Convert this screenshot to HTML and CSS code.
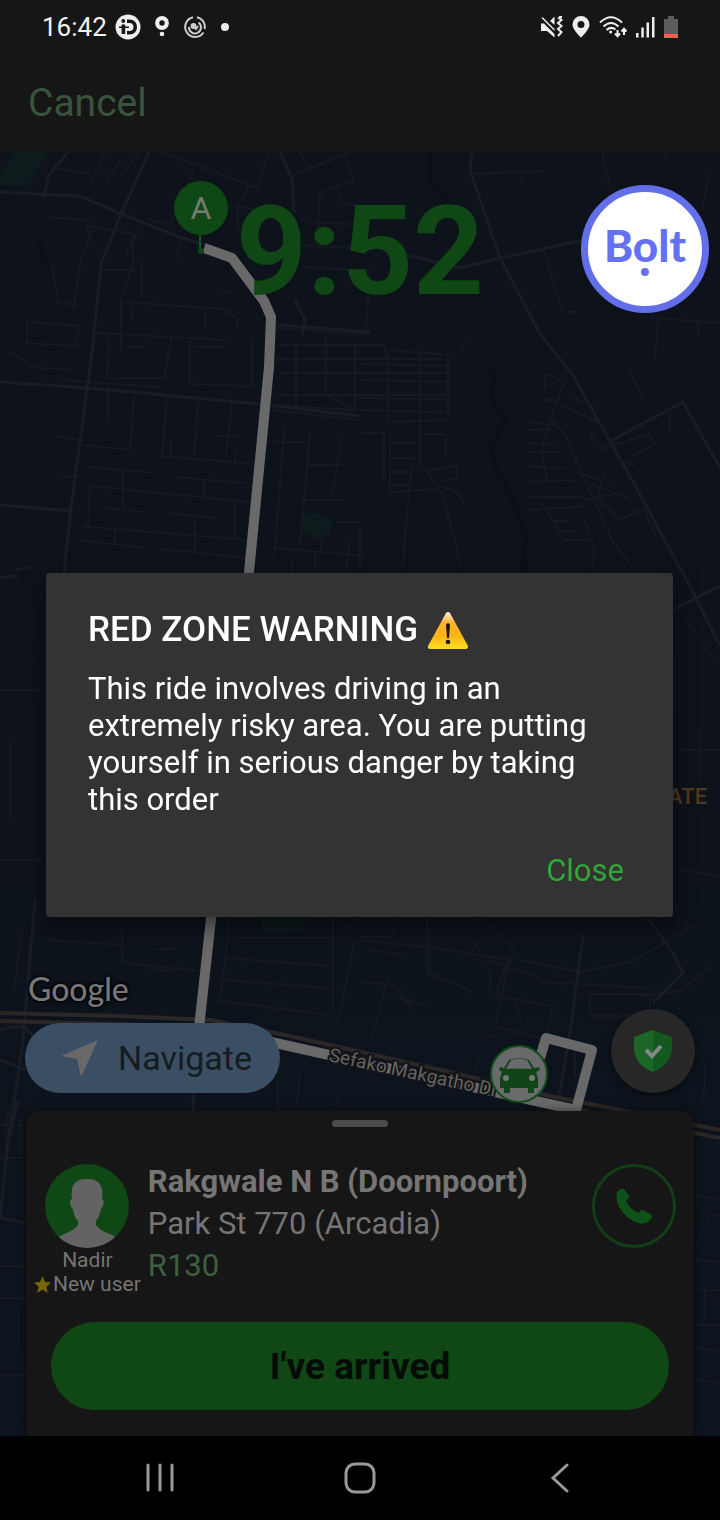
FILE: index.html
```html
<!DOCTYPE html>
<html lang="en">
<head>
<meta charset="utf-8">
<meta name="viewport" content="width=device-width, initial-scale=1">
<title>Ride in progress</title>
<link rel="stylesheet" href="styles.css">
</head>
<body>
<div class="screen">
  <header class="status">
    <time class="clock">16:42</time>
    <div class="status-group notifications">
      <svg width="26" height="26" viewBox="0 0 26 26" aria-hidden="true"><circle cx="13" cy="13" r="12.500" fill="#eee"/><g fill="#161616"><circle cx="8.300" cy="7" r="1.900"/><path d="M6.600 10.500h3.600V20H6.600zM12 5.500h2.500c4.500 0 7.500 3 7.500 7.500s-3 7.500-7.500 7.500H12v-3.500h2.500c2.500 0 4-1.600 4-4s-1.500-4-4-4H12z"/><path d="M4 12.500h10v1.500H4z"/></g></svg>
      <svg width="14" height="22" viewBox="0 0 14 22" aria-hidden="true"><circle cx="7" cy="7" r="4.800" fill="none" stroke="#eee" stroke-width="4.200"/><circle cx="7" cy="18" r="2.300" fill="#eee"/></svg>
      <svg width="24" height="24" viewBox="0 0 24 24" fill="none" stroke="#ccc" stroke-width="2" aria-hidden="true"><path d="M14 2.200A10 10 0 0 1 21.700 14"/><path d="M20.500 17.500A10 10 0 1 1 10 2.200"/><path d="M15.500 7.500A6 6 0 1 1 6 12"/><circle cx="10.500" cy="11" r="2" fill="#ccc"/><path d="M10 11l3 3 2-3"/></svg>
      <svg width="8" height="8" viewBox="0 0 8 8" aria-hidden="true"><circle cx="4" cy="4" r="4" fill="#eee"/></svg>
    </div>
    <div class="status-group system">
      <svg width="22" height="22" viewBox="0 0 22 22" fill="#eee" aria-hidden="true"><path d="M0 7.500h3l10.500 10.500v3.500L6 15H0zM1.500 1l12 12v2L.5 2zM9 5l4.500-4.500V9z"/><path d="M17 1.500l3.500 2.500-3.500 3 3.500 3-3.500 3 3.500 3-3.500 4M18 1h3" fill="none" stroke="#eee" stroke-width="2"/></svg>
      <svg width="18" height="22" viewBox="0 0 18 22" aria-hidden="true"><path fill="#eee" fill-rule="evenodd" d="M9 0a8.500 8.500 0 0 1 8.500 8.500C17.500 14 9 21.500 9 21.500S.5 14 .5 8.500A8.500 8.500 0 0 1 9 0zm0 5a3.500 3.500 0 1 0 0 7 3.500 3.500 0 0 0 0-7z"/></svg>
      <svg width="28" height="22" viewBox="0 0 28 22" fill="none" stroke="#eee" stroke-width="2" aria-hidden="true"><path d="M1 6.500Q12 -4 23 6.500M4.500 10.500Q12 3.500 19.500 10.500M7.500 14q4.500-4 9-.500"/><circle cx="11.700" cy="16" r="1.500" fill="#eee" stroke="none"/><path d="M18.500 14v6m-2.500-2.500l2.500 2.700 2.500-2.700M25 19v-6m-2.500 2.500l2.500-2.700 2.500 2.700"/></svg>
      <svg width="19" height="21" viewBox="0 0 19 21" fill="#eee" aria-hidden="true"><path d="M0 16h2.500v4.500H0zM5.300 10.500h2.500v10H5.300zM10.500 5.500H13v15h-2.500zM16 0h2.500v20.500H16z"/></svg>
      <svg width="14" height="22" viewBox="0 0 14 22" aria-hidden="true"><path fill="#5c5c5c" d="M4 0h6v3h4v15H0V3h4z"/><path fill="#f26152" d="M0 18h14v4H0z"/></svg>
    </div>
  </header>

  <div class="topbar"><button class="cancel" type="button">Cancel</button></div>

  <main class="map">
    <svg class="map-canvas" viewBox="0 152 720 1284" preserveAspectRatio="xMidYMid slice" role="img" aria-label="Route map">
      <defs>
        <linearGradient id="land" x1="0" y1="0" x2="0" y2="1"><stop offset="0" stop-color="#0e121a"/><stop offset=".6" stop-color="#0d131b"/><stop offset="1" stop-color="#0d141f"/></linearGradient>
      </defs>
      <rect y="152" width="720" height="1284" fill="url(#land)"/>
      <g fill="#0e1b1c">
        <path d="M14 152h34l-20 34H0v-10z"/><path d="M300 516l18-4 15 8-4 14-14 4-14-8z"/><path d="M262 917h45l-4 14-42 1z"/>
      </g>
      <g class="water"><path d="M494 370l-2 30 14 20-14 24 2 20 16 30 16 40-4 40M430 152v30l18 20"/><path d="M38 240l10 28"/></g>
      <g class="streets">
        <path d="M54 168l36 6M105 152l-16 32M120 160l-13 23M140 152l-20 24M162 152l95 36 12-36M194 170l-10 22-14 34M250 185l-12 20v24M300 152l8 16 40-14M292 176l60-24M317 245l3-52 33-12-8-29M336 184l8 20 16 2M309 222l60 3M302 245l70 4M302 267l68 4-4 60M228 205l25 4M48 217l40 3 5 10-12 30-8 50"/>
        <path d="M90 241l-3-15 46 8v30l-12 36v50M101 270h35M52 265l6 38 20 2M138 230l-12 25M180 240l-4 20M145 218l20 6M121 302l104 7 12 10v10M142 260v38M27 322l53 4-5 20-48-3zM10 352l25 16 34 1M96 333l132 7M109 340l-2 38h57l8-43M190 340v44l62 2v-48M132 306v14M205 312v16M222 290l10 5M125 347h20M195 347h30"/>
        <path d="M275 328l90 6M280 345h104l2 14M275 359h168M280 373h170M276 395h170M275 405l80 5M296 345v62M326 335v60l28 15M355 345v65M388 350v72M420 350v80M448 355v65M390 350l57 5M360 364l88 2M360 380l88 2M360 398l85 1M360 410l85 2M460 350l8-10M388 422l60-2M362 433h22v50M390 434v58l48-3M420 430v34M424 434h22v22M392 443h24M392 458h22M392 472h20M392 485h18M412 464l-6 60-3 48M422 464l20 30 14 50 5 28M430 470l26-4 2 12-20 4M435 485l20 6 10 12M360 524v48M350 540l-4 32"/>
        <path d="M60 380l100 7M108 386v36M134 396l-4 52M82 445l50 5M56 436l24 4M167 398l-5 58 92 8M198 402l-4 53M232 402l-6 53M215 436h22M171 440v18M236 450l-2 14M88 467l66 6M90 486l160 16M90 486l-2 46M123 470v38M105 508l40 4M175 477l70 6M204 480v18M168 513l48 5M195 518v36M82 526l165 14M235 502v36M78 540l68 8M115 530v14M160 549l90 9M60 477l20-1"/>
        <path d="M284 428l-4 58-6 72M310 432l-6 70-4 44M342 436l-10 60M275 442h30M306 465h40M303 500h40M336 522h24M275 548l90 8M292 558v14M315 555v17M346 560v12M322 536l-2 18M272 410l88 10"/>
        <path d="M545 375l16 4-16 10v-14zM565 380l-15 40-8 30 5 32M550 418l16 18 18 42 30 66 18 22M529 422l26 4M528 430h22M528 443l28 2M528 452h32M528 466l38 3M529 482l50-2M529 497h54M530 510l56-4M540 400h20M553 521h17M557 531h18M540 500l24 40h26M560 405l40 18M570 396l24 10M598 450l50-16 8 10-25 12M628 370l16 28M670 411v22M590 432l5 12M605 470l-8 30M577 472l36 14M615 458l20 8M590 484l38 14M600 500l20 20 24-12 12 30M585 520l10 30-4 20M584 500l40-8"/>
        <path d="M471 174l72-3M519 170l3 12M543 248l20 64h14M658 318l-3 40M698 320v16M657 318l63 5M602 152l8 36M710 170l-8 40M666 152v5"/>
        <path d="M122 928v35l80 8M155 949h20M150 968l20 4M48 940l74 5M230 917l-10 84 110 14M240 938h95M226 958l105 8M225 980l100 8M333 917v90M355 940l-18 86M350 930l8-12M360 940l90 10 60 10M400 917l-8 20h-32M368 950l36 4M430 928v45M485 960l60 20M427 917v55l45 20M460 925l24-8 36 40M470 952l15-16M510 956l-15 40 58 10-8 34-50-14zM490 970v20M540 982l110 6M520 960l60 12 50-10 70-40M640 996l40-5 30-24M590 994h60v22h-60zM360 982l35 3 18 25M388 978l-16 60M395 997l30 8M480 1055l-5 18M485 1034l15 6M515 1000l6 22M575 1050h14v25h-14z"/>
        <path d="M300 1070l-4 40M278 1080v30M340 1095l-5 16M0 1125h24M10 1104l-6 36M20 1120v35M0 1158h25M0 1298h26M18 1310v40M0 1266h25M0 1375h26M696 1196l24 3M700 1235l10-20h10M696 1260l24 2M698 1290h22v12M705 1290v30M697 1325h23M697 1348l23 3M697 1380l23 3M706 1060l-3 40"/>
        <path d="M680 750h40M700 730v50M0 690h40M10 740v80M0 860h44M22 930l-8 60M680 870l40 6M685 620l30 40"/>
      </g>
      <g class="roads">
        <path d="M0 192l80 4 42 18 60 24 24 7M68 152l-20 24-4 22M149 152l-28 62-20 50-8 80-6 46-15 110-8 72M0 382l88 6 172 16 100 12M0 505l72 6M277 325l93 7M280 152l12 26 2 34M295 300l10 20-3 15"/>
        <path d="M470 170l30 88 40 76 32 40 60 106 60 110 28 56M388 250l70 18 44-10 100-22M612 440l71-38 37 66M590 420h9M470 170l2-18M672 610l48-24M0 578l15-2M15 570l15-3"/>
        <path d="M35 900l-13 150-14 90-8 80M583 935l-12 90-15 90M193 1090v21M0 1030q30-10 35 12M0 1218l26 5M18 1100l-12 50M648 918l25 35 10 20-30 30M0 1060l26 10"/>
      </g>
      <g class="highway">
        <path d="M0 1013l120 3 90 4 80 16 160 36 100 24 170 34"/><path d="M0 1021l120 3 90 4 80 16 160 36 100 24 170 34"/>
      </g>
      <path class="route" d="M204 248l28 10 32 43 7 16-2 50-20 205-50 456 72 14 125 28 180 40 16-60-46-12-6 20"/>
      <path d="M200 230v20" stroke="#0f5a19" stroke-width="2"/><circle cx="201" cy="251" r="3" fill="#0f4415"/>
      <circle cx="201" cy="208" r="27" fill="#0f4715"/><text class="pin-label" x="201" y="219">A</text>
      <text class="road-label" transform="translate(328 1061) rotate(12)">Sefako Makgatho Dr</text>
      <circle cx="519" cy="1074" r="28" fill="#6a6a6c" stroke="#104d19" stroke-width="2"/>
      <path fill="#0f4517" fill-rule="evenodd" d="M506 1069l5-9q8-3 16 0l5 9q-13-1-26 0zm-6-2l4 1 5-8q10-4 20 0l5 8 5-1 1 3-4 2 2 6v10h-4v5h-6v-5h-18v5h-6v-5h-4v-10l2-6-3-2z"/>
      <circle cx="506" cy="1078" r="3" fill="#777"/><circle cx="532" cy="1078" r="3" fill="#777"/>
      <text class="area-label" x="668" y="804">ATE</text>
    </svg>

    <div class="map-top">
      <p class="timer">9:52</p>
      <button class="bubble" type="button" aria-label="Bolt">
        <span class="bolt-word">Bolt</span>
        <span class="bolt-dot"></span>
      </button>
    </div>

    <p class="google">Google</p>
    <div class="map-actions">
      <button class="navigate" type="button">
        <svg width="38" height="38" viewBox="0 0 38 38" aria-hidden="true"><path fill="#6a6868" d="M37 1L20 38l-4-18L0 17z"/></svg>
        Navigate
      </button>
      <button class="safety" type="button" aria-label="Safety">
        <svg width="40" height="42" viewBox="0 0 40 42" aria-hidden="true"><path fill="#13581e" d="M20 0l19 7v11c0 11-8 20-19 24C9 38 1 29 1 18V7z"/><path fill="#1b6728" d="M20 0v42C9 38 1 29 1 18V7z"/><path d="M13 20l6 6 9-10" fill="none" stroke="#858585" stroke-width="4"/></svg>
      </button>
    </div>

    <section class="sheet">
      <div class="handle"></div>
      <div class="order">
        <div class="rider">
          <svg class="avatar" viewBox="0 0 84 84" aria-hidden="true"><defs><clipPath id="face"><circle cx="42" cy="42" r="42"/></clipPath></defs><g clip-path="url(#face)"><path fill="#0f4715" d="M0 0h84v84H0z"/><path fill="#636363" d="M27 35c-2-14 3-20 15-20s17 6 15 20c3 0 1 9-1 10-1 6-3 9-5 12v4c4 6 13 8 19 12v14H14V73c6-4 15-6 19-12v-4c-3-3-4-6-5-12-2-1-5-10-1-10z"/></g></svg>
          <span>Nadir</span>
          <span class="rating"><svg width="17" height="17" viewBox="0 0 24 24" aria-hidden="true"><path fill="#756508" d="M12 0l3.500 8.500 8.500.5-6.500 6 2 9L12 19l-7.500 5 2-9L0 9l8.500-.5z"/></svg>New user</span>
        </div>
        <div class="details">
          <strong class="pickup">Rakgwale N B (Doornpoort)</strong>
          <span>Park St 770 (Arcadia)</span>
          <span class="fare">R130</span>
        </div>
        <button class="call" type="button" aria-label="Call rider">
          <svg width="36" height="36" viewBox="0 0 36 36" aria-hidden="true"><path fill="#0f5219" d="M1 4Q5 0 8 1l5 7q1 2-3 5 3 7 12 12 3-4 5-3l8 4q2 2 0 5-5 6-13 4C10 31-2 17 1 4z"/></svg>
        </button>
      </div>
      <button class="arrived" type="button">I've arrived</button>
    </section>
  </main>

  <nav class="navbar" aria-label="System navigation">
    <button type="button" aria-label="Recent apps"><svg width="28" height="30" viewBox="0 0 28 30" aria-hidden="true"><path d="M2 2v25M14 2v25M26 2v25" stroke="#999" stroke-width="3" stroke-linecap="round"/></svg></button>
    <button type="button" aria-label="Home"><svg width="32" height="32" viewBox="0 0 32 32" aria-hidden="true"><rect x="2" y="2" width="28" height="28" rx="9" fill="none" stroke="#999" stroke-width="3"/></svg></button>
    <button type="button" aria-label="Back"><svg width="20" height="30" viewBox="0 0 20 30" aria-hidden="true"><path d="M17 2L3 15l14 13" fill="none" stroke="#999" stroke-width="3" stroke-linecap="round"/></svg></button>
  </nav>
</div>

<div class="overlay">
  <section class="dialog" role="alertdialog" aria-labelledby="dialog-title" aria-describedby="dialog-text">
    <h1 class="dialog-title" id="dialog-title">RED ZONE WARNING
      <svg width="42" height="37" viewBox="0 0 42 37" role="img" aria-label="warning"><defs><linearGradient id="sign" x1="0" y1="0" x2="0" y2="1"><stop offset="0" stop-color="#fff1dc"/><stop offset=".3" stop-color="#ffb02c"/><stop offset=".65" stop-color="#fdb515"/><stop offset="1" stop-color="#ffde22"/></linearGradient></defs><path fill="url(#sign)" d="M19 1q2-2 4 0l18 33q0 3-2 3H3q-3 0-2-3z"/><path fill="#1d160b" d="M19 13q2-4 4 0l-1 13h-2z"/><circle cx="21" cy="30" r="2.300" fill="#1d160b"/></svg>
    </h1>
    <p class="dialog-text" id="dialog-text">This ride involves driving in an extremely risky area. You are putting yourself in serious danger by taking this order</p>
    <button class="close" type="button">Close</button>
  </section>
</div>
</body>
</html>
```
FILE: styles.css
```css
* { box-sizing: border-box; }

body {
  margin: 0;
  background: #000;
  color: #757575;
  font-family: Roboto, "Liberation Sans", sans-serif;
}

p, h1 { margin: 0; }

button {
  margin: 0;
  padding: 0;
  border: 0;
  background: none;
  color: inherit;
  font: inherit;
}

svg { display: block; flex: none; }

.screen {
  display: flex;
  flex-direction: column;
  min-height: 100vh;
}

.status {
  display: flex;
  align-items: center;
  gap: 8px;
  height: 54px;
  padding: 0 42px;
  background: #161616;
}

.clock { color: #f2f2f2; font-size: 26px; }

.status-group { display: flex; align-items: center; }
.notifications { gap: 14px; }
.system { gap: 9px; margin-left: auto; }

.topbar {
  display: flex;
  align-items: center;
  height: 98px;
  padding: 0 28px 0;
  background: #161616;
}

.cancel { color: #3a533d; font-size: 39px; }

.map {
  position: relative;
  display: flex;
  flex: 1;
  flex-direction: column;
}

.map-canvas {
  position: absolute;
  inset: 0;
  width: 100%;
  height: 100%;
}

.map > :not(.map-canvas) { position: relative; }

.streets, .roads, .water, .highway { fill: none; }
.streets { stroke: #141922; stroke-width: 2; }
.roads { stroke: #181c24; stroke-width: 3; }
.water { stroke: #0a1018; stroke-width: 5; }
.highway { stroke: #2b2724; stroke-width: 4; }
.route { fill: none; stroke: #696969; stroke-width: 10; stroke-linejoin: round; }

.pin-label { fill: #737b73; font-size: 32px; text-anchor: middle; }

.road-label {
  fill: #66615a;
  stroke: #10141a;
  stroke-width: 4;
  paint-order: stroke;
  font-size: 19px;
}

.area-label { fill: #50371f; font-size: 22px; font-weight: 500; }

.map-top {
  display: grid;
  grid-template-columns: 1fr auto 1fr;
  align-items: start;
  padding: 27px 11px 0;
}

.timer {
  grid-column: 2;
  color: #0f4715;
  font-size: 124px;
  font-weight: 700;
  line-height: 146px;
}

.bubble {
  display: flex;
  flex-direction: column;
  align-items: center;
  justify-self: end;
  width: 128px;
  height: 128px;
  margin-top: 6px;
  padding-top: 30px;
  border: 7px solid #626fe8;
  border-radius: 50%;
  background: #fff;
  color: #6571f5;
}

.bolt-word { font: 900 44px/46px Lato, sans-serif; }
.bolt-dot { width: 8px; height: 8px; border-radius: 50%; background: #6571f5; }

.google {
  margin-top: auto;
  padding-left: 28px;
  color: #777;
  font: 500 32px/40px Lato, sans-serif;
  text-shadow: 0 0 2px #000, 0 0 3px #000, 0 0 4px #000;
}

.map-actions {
  display: flex;
  align-items: center;
  justify-content: space-between;
  padding: 0 25px 18px;
}

.navigate {
  display: flex;
  align-items: center;
  gap: 19px;
  height: 70px;
  margin-top: 14px;
  padding: 0 28px 0 36px;
  border-radius: 35px;
  background: #3b4f64;
  color: #161b20;
  font-size: 34px;
}

.safety {
  display: grid;
  place-items: center;
  width: 84px;
  height: 84px;
  border-radius: 50%;
  background: #272728;
  box-shadow: 0 2px 6px #0008;
}

.sheet {
  margin: 0 26px;
  padding: 9px 0 26px;
  border-radius: 12px 12px 0 0;
  background: #161616;
  box-shadow: 0 0 8px #0008;
}

.handle {
  width: 56px;
  height: 7px;
  margin: 0 auto 37px;
  border-radius: 4px;
  background: #4c4c4c;
}

.order { display: flex; padding: 0 18px 0 8px; }

.rider {
  display: flex;
  flex-direction: column;
  align-items: center;
  margin-right: 7px;
  font-size: 21px;
  line-height: 24px;
}

.avatar { width: 84px; height: 84px; }
.rating { display: flex; align-items: center; gap: 2px; }

.details {
  display: flex;
  flex: 1;
  flex-direction: column;
  font-size: 31px;
  line-height: 42px;
  margin-top: -3px;
}

.pickup { font-weight: 700; }
.fare { color: #3f5f42; }

.call {
  display: grid;
  place-items: center;
  width: 84px;
  height: 84px;
  border: 3px solid #123f19;
  border-radius: 50%;
}

.arrived {
  display: block;
  width: calc(100% - 50px);
  height: 88px;
  margin: 26px 25px 0;
  border-radius: 44px;
  background: #0f4715;
  color: #050b06;
  font-size: 37px;
  font-weight: 700;
}

.navbar {
  display: flex;
  align-items: center;
  justify-content: space-around;
  height: 84px;
  padding: 0 60px;
  background: #000;
}

.navbar button { display: grid; place-items: center; width: 60px; height: 60px; }

.overlay {
  position: fixed;
  inset: 54px 0 84px;
  display: grid;
  align-items: center;
  padding: 0 47px 0 46px;
}

.dialog {
  display: flex;
  flex-direction: column;
  padding: 36px 49px 25px 42px;
  border-radius: 4px;
  background: #333;
  color: #fff;
  box-shadow: 0 8px 24px #0008;
}

.dialog-title {
  display: flex;
  align-items: center;
  gap: 9px;
  font-size: 35px;
  font-weight: 500;
  line-height: 42px;
}

.dialog-text {
  margin: 19px 0 32px;
  font-size: 31px;
  line-height: 37px;
}

.close {
  align-self: flex-end;
  color: #2fa838;
  font-size: 31px;
  line-height: 42px;
}
```
